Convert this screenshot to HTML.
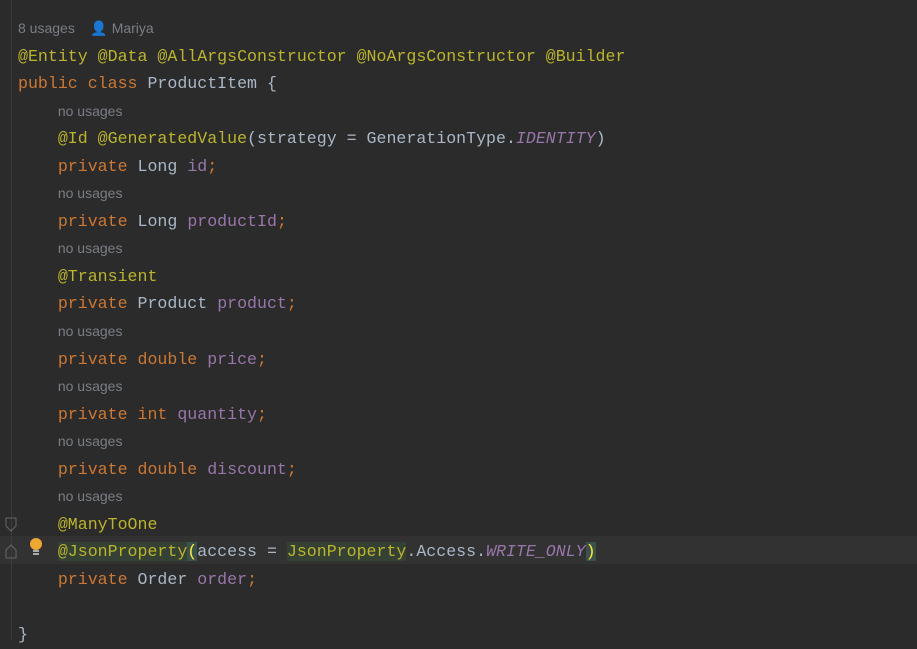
<!DOCTYPE html><html><head><style>
body{margin:0;width:917px;height:640px;background:#2b2b2b;overflow:hidden;position:relative}
.g{position:absolute;left:11px;top:0;width:1px;height:640px;background:#3c3c3c}
.cur{position:absolute;left:0;top:536px;width:917px;height:28px;background:#323232}
.c{position:absolute;left:18px;top:15px;font-family:"Liberation Mono",monospace;font-size:16.6px;color:#a9b7c6}
.c div{height:27.55px;line-height:27.55px;white-space:pre}
.h{font-family:"Liberation Sans",sans-serif;font-size:14px;color:#7a7e85}
.a{color:#bbb529}.k{color:#cc7832}.f{color:#9876aa}.i{color:#9876aa;font-style:italic}
.m{background:#344134}.p{background:#3b514d;color:#ffef28}
</style></head><body>
<div class="cur"></div><div class="g"></div>
<svg style="position:absolute;left:4px;top:516px" width="14" height="44"><path d="M2 2h10v8l-5 5-5-5z M2 42h10v-8l-5-5-5 5z" fill="none" stroke="#666" stroke-width="1"/></svg>
<svg style="position:absolute;left:28px;top:537px" width="16" height="20"><circle cx="8" cy="7" r="6" fill="#f0a732"/><rect x="5" y="13" width="6" height="2" fill="#aaa"/><rect x="5" y="16" width="6" height="2" fill="#aaa"/></svg>
<div class="c"><div><span class="h">8 usages    👤 Mariya</span></div><div><span class="a">@Entity @Data @AllArgsConstructor @NoArgsConstructor @Builder</span></div><div><span class="k">public class </span>ProductItem {</div><div>    <span class="h">no usages</span></div><div>    <span class="a">@Id @GeneratedValue</span>(strategy = GenerationType.<span class="i">IDENTITY</span>)</div><div>    <span class="k">private </span>Long <span class="f">id</span><span class="k">;</span></div><div>    <span class="h">no usages</span></div><div>    <span class="k">private </span>Long <span class="f">productId</span><span class="k">;</span></div><div>    <span class="h">no usages</span></div><div>    <span class="a">@Transient</span></div><div>    <span class="k">private </span>Product <span class="f">product</span><span class="k">;</span></div><div>    <span class="h">no usages</span></div><div>    <span class="k">private double </span><span class="f">price</span><span class="k">;</span></div><div>    <span class="h">no usages</span></div><div>    <span class="k">private int </span><span class="f">quantity</span><span class="k">;</span></div><div>    <span class="h">no usages</span></div><div>    <span class="k">private double </span><span class="f">discount</span><span class="k">;</span></div><div>    <span class="h">no usages</span></div><div>    <span class="a">@ManyToOne</span></div><div>    <span class="a m">@JsonProperty</span><span class="p">(</span>access = <span class="a m">JsonProperty</span>.Access.<span class="i">WRITE_ONLY</span><span class="p">)</span></div><div>    <span class="k">private </span>Order <span class="f">order</span><span class="k">;</span></div><div> </div><div>}</div></div>
</body></html>
